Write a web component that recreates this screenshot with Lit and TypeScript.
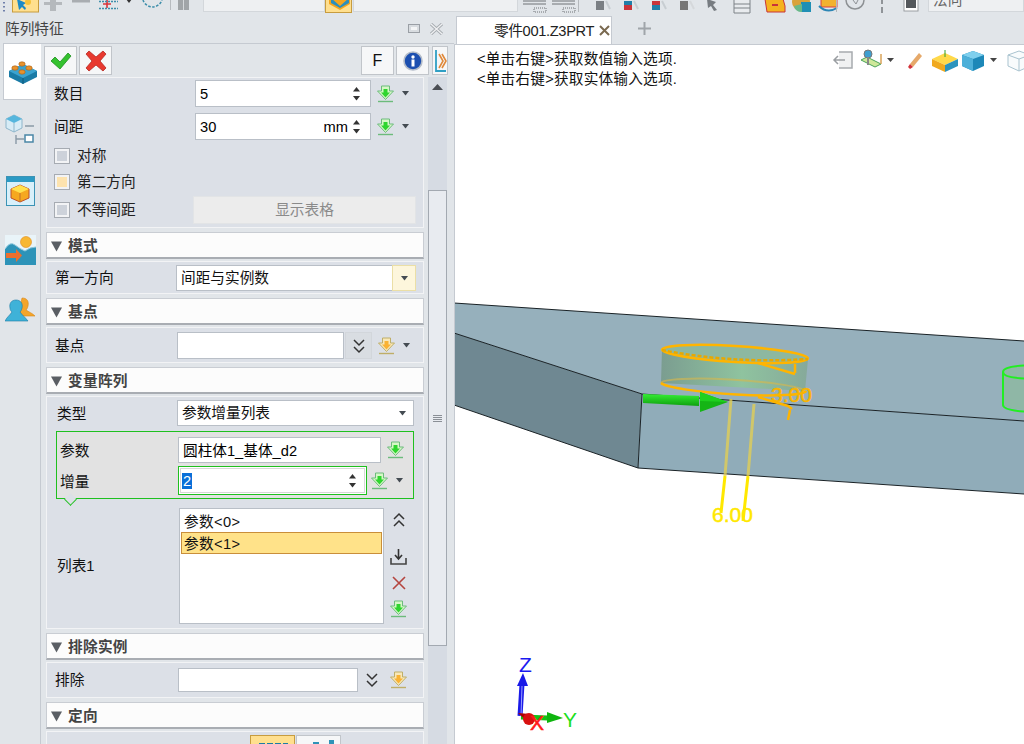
import { css, html, LitElement } from "lit";
import { customElement } from "lit/decorators.js";

const caret = () => html`<svg class="caret" width="7" height="5" viewBox="0 0 7 5"><path d="M0 0h7L3.5 4.5z" fill="#444b52"/></svg>`;

const spin = () => html`<span class="spin">
  <svg width="7" height="5" viewBox="0 0 7 5"><path d="M0 4.5h7L3.5 0z" fill="#333"/></svg>
  <svg width="7" height="5" viewBox="0 0 7 5"><path d="M0 0h7L3.5 4.5z" fill="#333"/></svg>
</span>`;

const pick = (kind: "green" | "orange" = "green") => {
  const top = kind === "green" ? "#2fd52f" : "#f9b233";
  const low = kind === "green" ? "#d6f8c6" : "#f8e8b8";
  const edge = kind === "green" ? "#6cbb7c" : "#bfae68";
  return html`<svg class="pick" width="17" height="18" viewBox="0 0 17 18">
    <path d="M4.500 1h8v5h4l-8 8.500L.5 6h4z" fill="${low}" stroke="${edge}" stroke-width="1"/>
    <path d="M6.500 4h4v3.500h2.500l-4.500 5-4.500-5h2.500z" fill="${top}"/>
    <path d="M1 16.500h15" stroke="${edge}" stroke-width="1.400"/>
  </svg>`;
};

const chevrons = (up = false) => html`<svg width="12" height="16" viewBox="0 0 12 16">
  <path d="${up ? "M1 7l5-5 5 5M1 14l5-5 5 5" : "M1 2l5 5 5-5M1 9l5 5 5-5"}" fill="none" stroke="#333" stroke-width="1.500"/>
</svg>`;

const tri = () => html`<svg class="tri" width="11" height="11" viewBox="0 0 11 11"><path d="M0 .5h11L5.500 10.500z" fill="#5a5e64"/></svg>`;

const brickIcon = html`<svg width="30" height="26" viewBox="0 0 30 26">
  <path d="M1 12L15 5l14 7v6l-14 7-14-7z" fill="#1a7ba6"/>
  <path d="M1 12l14 7 14-7-14-7z" fill="#3ba3cf"/>
  <path d="M15 19v6" stroke="#0d5878"/>
  <g fill="#e8922c" stroke="#a85f16" stroke-width=".6">
    <ellipse cx="14" cy="5" rx="3.200" ry="2.200"/><ellipse cx="21" cy="9" rx="3.200" ry="2.200"/>
    <ellipse cx="7" cy="9" rx="3.200" ry="2.200"/><ellipse cx="14" cy="13" rx="3.200" ry="2.200"/>
  </g>
</svg>`;

const treeIcon = html`<svg width="30" height="32" viewBox="0 0 30 32">
  <path d="M1 6l8-4 8 4v9l-8 4-8-4z" fill="#d7ecf6" stroke="#8fb6cb"/>
  <path d="M1 6l8 4 8-4-8-4z" fill="#56b6dd"/>
  <path d="M9 10v9" stroke="#8fb6cb"/>
  <path d="M20 13h9M11 22v9M11 26h8" stroke="#8a9aa6" stroke-width="1.400"/>
  <rect x="20" y="22" width="8" height="7" fill="#fff" stroke="#4a87a6" stroke-width="1.500"/>
</svg>`;

const windowIcon = html`<svg width="29" height="30" viewBox="0 0 29 30">
  <rect x=".5" y=".5" width="28" height="29" fill="#d8f0fa" stroke="#3c93b5"/>
  <rect x="1" y="1" width="27" height="5" fill="#2b9ac4"/>
  <path d="M5 13l9-4 9 4v9l-9 4-9-4z" fill="#f6a81f" stroke="#c0502a"/>
  <path d="M5 13l9 4 9-4-9-4z" fill="#ffe14d"/>
  <path d="M14 17v9" stroke="#c0702a"/>
</svg>`;

const sceneIcon = html`<svg width="31" height="30" viewBox="0 0 31 30">
  <rect width="31" height="30" fill="#e9f4f9"/>
  <path d="M0 14q5-8 10-4t10 6q5-4 11-4v18H0z" fill="#2d93b8"/>
  <path d="M0 14q5-8 10-4t10 6q5-4 11-4" fill="none" stroke="#8fc7dc"/>
  <circle cx="21" cy="7" r="5.500" fill="#f7b733" stroke="#e08a1e" stroke-width=".6"/>
  <path d="M1 18h10v-4l6 6.500-6 6.500v-4H1z" fill="#ec6f2d"/>
</svg>`;

const usersIcon = html`<svg width="31" height="26" viewBox="0 0 31 26">
  <path d="M17 1c5 0 7 3 6 8-.5 2-1 3-2 4 3 2 6 3 9 6H13z" fill="#f4a52b" stroke="#d98716" stroke-width=".6"/>
  <path d="M11 3c5 0 7 4 6 8-.5 2-1 3-2 4 2 3 5 5 8 9H0c2-4 5-6 7-9-1-1-2-2-2-4-1-4 1-8 6-8z" fill="#3fb2d8" stroke="#1a7ba6" stroke-width=".6"/>
</svg>`;

const toolLeft = html`<svg width="203" height="14" viewBox="0 0 203 14">
  <path d="M4 2v2M4 6v2M4 10v2" stroke="#4b5f96" stroke-width="1.500" stroke-dasharray="1.500 1"/>
  <rect x="12.500" y="-2" width="26" height="14" fill="#ffdf8e" stroke="#c79c3f"/>
  <path d="M17-1l2 11 3-3 3 3 1-2-3-3 3-2z" fill="#1c8ac7"/>
  <circle cx="28" cy="2" r="3" fill="#f5c33b"/>
  <path d="M50-1h6v3h6v3h-6v6h-6V5h-6V2h6z" fill="#b5b9bd"/>
  <rect x="72" y="-1" width="18" height="3.500" fill="#a9adb1"/>
  <path d="M107 0v8M103 4h8" stroke="#d9343a" stroke-width="1.600"/>
  <path d="M99 8.500h19M99 1.500h19" stroke="#3d8eaa" stroke-width="1.500" stroke-dasharray="2 1"/>
  <path d="M126-1h6l-3 4z" fill="#333"/>
  <path d="M143 0a10 10 0 0 0 19 0" fill="none" stroke="#3d8eaa" stroke-width="1.500" stroke-dasharray="2.500 1.500"/>
  <path d="M170.500 0v10" stroke="#b7bbbf"/>
  <rect x="178" y="-1" width="11" height="11" fill="#a1a5a8"/>
  <path d="M183.500-1v11" stroke="#d5d8db"/>
</svg>`;

const toolRight = html`<svg width="410" height="14" viewBox="0 0 410 14">
  <g stroke="#6e7276" fill="none">
    <path d="M5 1h23M5 4h23"/><path d="M16 8h12v4H16z" stroke-dasharray="1 1"/>
    <path d="M34 1h23M34 4h23"/><path d="M45 8h12v4H45z" stroke-dasharray="1 1"/>
  </g>
  <path d="M60.500 0v12" stroke="#b4b8bc"/>
  <g>
    <rect x="78" y="1" width="8" height="9" fill="#7a7f84"/><path d="M88 1l4 8" stroke="#c8cdd2" stroke-width="2"/>
    <rect x="106" y="1" width="8" height="4" fill="#1f7ea8"/><rect x="106" y="5" width="8" height="5" fill="#c8343a"/><path d="M116 1l4 8" stroke="#c8cdd2" stroke-width="2"/>
    <rect x="134" y="1" width="8" height="4" fill="#c8343a"/><rect x="134" y="5" width="8" height="5" fill="#1f7ea8"/><path d="M144 1l4 8" stroke="#c8cdd2" stroke-width="2"/>
    <rect x="162" y="1" width="8" height="9" fill="#777"/><path d="M172 1l4 8" stroke="#d5d8db" stroke-width="2"/>
  </g>
  <path d="M189-1l9 3-3 3 4 5-3 1-3-5-3 2z" fill="#777c81"/>
  <path d="M216-1h16v14h-16zM216 4h16M216 8h16" fill="#e8ebee" stroke="#7d8287"/>
  <path d="M247-1h18l2 7v6h-18z" fill="#f5b21f" stroke="#c8343a"/><path d="M254 5h6" stroke="#c8343a" stroke-width="2"/>
  <circle cx="283" cy="2" r="9" fill="#d9a23a"/><path d="M283 2h10v10h-10z" fill="#1f8fb5"/><path d="M276 6a8 8 0 0 0 8 6V4z" fill="#69b98a"/>
  <rect x="303" y="-2" width="16" height="9" fill="#f2b22f" stroke="#d94040"/><path d="M301 6q8 8 18 2" fill="none" stroke="#2c86b5" stroke-width="2"/>
  <path d="M318.500 0v12" stroke="#b4b8bc"/>
  <path d="M328 0a9 9 0 0 0 18 0" fill="none" stroke="#8d9194" stroke-width="1.500"/><path d="M335 0l3 4 2-4" stroke="#8d9194" fill="none"/>
  <path d="M364 0v4M364 7v6" stroke="#767a7e" stroke-width="1.500"/>
  <rect x="386" y="-2" width="14" height="13" fill="#fff" stroke="#9a9ea2"/><rect x="388" y="-2" width="10" height="10" fill="#54585c"/>
</svg>`;

const canvasIcons = html`<svg width="200" height="24" viewBox="0 0 200 24">
  <path d="M7 4h13v16H7" fill="#f0f1f2" stroke="#a7abaf" stroke-width="1.500"/><path d="M2 12h11M6 8l-4 4 4 4" fill="none" stroke="#9a9ea2" stroke-width="1.500"/>
  <path d="M29 12l14 7 6-3-14-7z" fill="#cfe89a" stroke="#4aa35a"/><circle cx="36" cy="6" r="4" fill="#3f9fd0" stroke="#777"/><path d="M36 9v8" stroke="#888" stroke-width="2"/><path d="M49 6v10" stroke="#d9a35a" stroke-width="1.500"/>
  <path d="M55 10h7l-3.500 4z" fill="#444"/>
  <g transform="translate(4 0)"><path d="M74 16l9-11 3 3-9 11z" fill="#e6a96a"/><path d="M74 16l3 3-3 2-2-2z" fill="#d3343a"/></g>
  <g transform="translate(8 0)"><path d="M92 11l13-6 13 6-13 6z" fill="#ffd94a"/><path d="M92 11l13 6v7l-13-6z" fill="#f0a91f"/><path d="M118 11l-13 6v7l13-6z" fill="#2b93bd"/><path d="M105 2v7" stroke="#2fa02f"/></g>
  <g transform="translate(8 0)"><path d="M122 7l11-4 11 4v11l-11 5-11-5z" fill="#1d88b8"/><path d="M122 7l11 4 11-4-11-4z" fill="#7fd0ee"/><path d="M133 11v12L122 18V7z" fill="#4db0d9"/></g>
  <path d="M158 10h7l-3.500 4z" fill="#444"/>
  <g transform="translate(12 0)"><path d="M164 7l11-4 11 4v11l-11 5-11-5z" fill="#f8fbfc" stroke="#a9c3cf"/><path d="M164 7l11 4 11-4M175 11v12" fill="none" stroke="#a9c3cf"/></g>
</svg>`;

const scene = html`<svg class="scene" width="570" height="700" viewBox="454 44 570 700">
  <defs>
    <linearGradient id="cyl" x1="0" x2="1" y1="0" y2="0">
      <stop offset="0" stop-color="#7b9d90"/><stop offset=".55" stop-color="#8fc39f"/><stop offset="1" stop-color="#86a99a"/>
    </linearGradient>
    <linearGradient id="shaft" x1="0" x2="0" y1="0" y2="1">
      <stop offset="0" stop-color="#35ee35"/><stop offset="1" stop-color="#0ea00e"/>
    </linearGradient>
  </defs>
  <path d="M454 302L1024 340V420L642 393 454 332z" fill="#96b0bc"/>
  <path d="M454 332L642 393 638 467 454 404z" fill="#6f8892"/>
  <path d="M642 393L1024 420V493L638 467z" fill="#90acb9"/>
  <path d="M454 302L1024 340M454 332L642 393L1024 420M642 393L638 467L1024 493M454 404L638 467" fill="none" stroke="#1a2226" stroke-width="1"/>

  <path d="M1040 363a37 7 0 0 0-37 7v33a37 7 0 0 0 21 6h16z" fill="#8fb7a6"/>
  <path d="M1024 364.500q-21 1-21 6.500t21 6.500M1003 371v33q0 5 21 6.500" fill="none" stroke="#22ee22" stroke-width="2"/>

  <path d="M662 348L808 358 805 390 661 382z" fill="url(#cyl)"/>
  <ellipse cx="735" cy="353" rx="73" ry="8" transform="rotate(3.500 735 353)" fill="#8db8a0" stroke="#ffb400" stroke-width="2.500"/>
  <path d="M662 349q70 14 146 9" fill="none" stroke="#e8a800" stroke-width="2.500" stroke-dasharray="4 2"/>
  <path d="M661 382a73 8 3.500 0 1 145 8" fill="none" stroke="#d9b84a" stroke-width="2" opacity=".6"/>
  <path d="M661 382a73 8 3.500 0 0 145 8" fill="none" stroke="#ffb400" stroke-width="2.500"/>
  <path d="M758 362L795 373M795 363v9" fill="none" stroke="#ffb400" stroke-width="2.500"/>
  <path d="M758 396L788 405L792 408M790 409l-2 10" fill="none" stroke="#ffb400" stroke-width="2.500"/>
  <path d="M731 398L725 475M754 403L748 475" stroke="#e6d050" stroke-width="3" opacity=".75"/>
  <path d="M725 475L721 512M748 475L743 520" stroke="#ffe800" stroke-width="3"/>
  <text class="dim" x="771" y="401" fill="#f8b400" stroke="#f8b400">3.00</text>
  <text class="dim" x="712" y="521" fill="#ffe800" stroke="#ffe800">6.00</text>
  <path d="M643 393L699 395V405L643 402z" fill="url(#shaft)"/>
  <path d="M700 391L728 401 700 411z" fill="#15b515"/>
  <path d="M700 391L728 401 700 400z" fill="#1fd01f"/>

  <path d="M520 715L522 683" stroke="#1a1ae8" stroke-width="5"/>
  <path d="M521 715L522 685" stroke="#9aa0ff" stroke-width="1"/>
  <path d="M517 685L523 672 528 685z" fill="#1a1ae8"/>
  <path d="M521 716L548 717" stroke="#15c015" stroke-width="5"/>
  <path d="M547 711L563 717 547 722z" fill="#0fb50f"/>
  <path d="M518 712L530 713 530 723z" fill="#b00000"/>
  <circle cx="529" cy="718" r="6" fill="#d81010"/>
  <text class="axis" x="519" y="671" fill="#1a1af0">Z</text>
  <text class="axis" x="530" y="729" fill="#ff1a1a" stroke="#ff1a1a" stroke-width=".5">X</text>
  <text class="axis" x="563" y="726" fill="#1ee01e">Y</text>
</svg>`;

@customElement("app-root")
export class AppRoot extends LitElement {
  static styles = css`
    :host {
      display: block;
      width: 1024px;
      height: 744px;
      overflow: hidden;
      background: #e1e5e9;
      color: #111;
      font: 14.67px/20px "Liberation Sans", "Noto Sans CJK SC", sans-serif;
    }
    svg { display: block; flex: none; }

    .toolbar { display: flex; height: 14px; overflow: hidden; }
    .tool-box { height: 12px; background: #eef0f2; border: 1px solid #d3d7db; border-top: 0; box-sizing: border-box; }
    .tool-box.a { width: 122px; }
    .tool-box.b { width: 165px; margin-left: 1px; }
    .tool-btn { width: 27px; height: 13px; background: #ffdf8e; border: 1px solid #c79c3f; border-top: 0; box-sizing: border-box; overflow: hidden; }
    .tool-box.c { flex: 1; color: #666; overflow: hidden; padding-left: 4px; margin-left: 0; }
    .tool-box.c span { display: block; margin-top: -10px; }

    .main { display: flex; height: 730px; }

    .panel { width: 454px; display: flex; flex-direction: column; flex: none; }
    .panel-title { height: 29px; flex: none; display: flex; align-items: center; padding: 0 10px 0 5px; color: #444; }
    .panel-title span { flex: 1; }
    .panel-title .close { margin-left: 9px; }
    .panel-body { flex: 1; display: flex; min-height: 0; }

    .tabs { width: 41px; flex: none; box-sizing: border-box; border-right: 1px solid #c5cad1; display: flex; flex-direction: column; align-items: center; position: relative; }
    .tab-on { width: 38px; height: 57px; box-sizing: border-box; background: #fff; border: 1px solid #c5cad1; border-right: 0; margin: 0 -1px 0 3px; display: flex; align-items: center; justify-content: center; flex: none; align-self: flex-start; position: relative; z-index: 1; }
    .tab-icon { width: 40px; display: flex; justify-content: center; height: 30px; align-items: center; flex: none; }
    .tab-icon.t2 { margin-top: 14px; }
    .tab-icon.t3 { margin-top: 32px; }
    .tab-icon.t4 { margin-top: 29px; }
    .tab-icon.t5 { margin-top: 30px; }

    .form { flex: 1; min-width: 0; display: flex; flex-direction: column; border-top: 1px solid #c5cad1; }
    .actions { height: 33px; flex: none; box-sizing: border-box; display: flex; padding: 2px 6px 0 3px; gap: 2px; }
    .act { height: 29px; width: 33px; box-sizing: border-box; background: #f6f7f8; border: 1px solid #c1c5ca; display: flex; align-items: center; justify-content: center; font-size: 16px; color: #111; flex: none; }
    .act.spacer-after { margin-right: auto; }
    .act.thin { width: 16px; margin-left: 1px; }

    .content { flex: 1; min-height: 0; display: flex; padding-left: 5px; gap: 4px; overflow: hidden; }
    .sections { width: 378px; flex: none; display: flex; flex-direction: column; gap: 4px; }
    .group { display: flex; flex-direction: column; gap: 2px; flex: none; }
    .head { height: 27px; box-sizing: border-box; flex: none; background: #fcfcfc; border: 1px solid #c9cdd3; border-bottom: 2px solid #a9adb3; display: flex; align-items: center; gap: 6px; padding: 2px 0 0 4px; font-weight: 700; color: #444; letter-spacing: .3px; }
    .body { background: #dce0e7; border: 1px solid #f2f3f5; box-sizing: border-box; padding: 0 7px 0 8px; flex: none; }
    .row { display: flex; align-items: center; }

    .field { height: 27px; box-sizing: border-box; background: #fff; border: 1px solid #b9bfc7; display: flex; align-items: center; padding: 0 4px 0 4px; flex: none; color: #000; }
    .field .grow { flex: 1; }
    .spin { display: flex; flex-direction: column; gap: 4px; margin: 0 6px 0 5px; }
    .caret { flex: none; }
    .pick { flex: none; }

    .s1 { padding: 2px 7px 3px 7px; }
    .s1 .lbl { width: 141px; }
    .s1 .field { width: 176px; }
    .s1 .pick { margin: 0 8px 0 6px; }
    .s1 .second { margin-top: 6px; }
    .s1 .check { margin-top: 8px; height: 16px; }
    .s1 .check.c2 { margin-top: 10px; }
    .s1 .last { margin-top: 6px; height: 28px; }
    .check-wrap { display: flex; align-items: center; gap: 7px; color: #222; }
    .box { width: 16px; height: 16px; box-sizing: border-box; border: 1px solid #a6abb2; background: #f2f3f5; padding: 2px; flex: none; }
    .box i { display: block; width: 100%; height: 100%; background: #cdd2da; }
    .box.on i { background: #fde3ae; }
    .wide-btn { margin-left: auto; width: 223px; height: 28px; box-sizing: border-box; background: #ececec; border: 1px solid #e2e4e6; color: #8a8a8a; display: flex; align-items: center; justify-content: center; }

    .mode { padding-top: 3px; padding-bottom: 2px; }
    .mode .lbl { width: 121px; }
    .combo { height: 26px; width: 240px; box-sizing: border-box; background: #fff; border: 1px solid #b9bfc7; display: flex; align-items: center; padding-left: 4px; flex: none; }
    .combo span { flex: 1; }
    .combo .btn { width: 22px; align-self: stretch; margin: -1px -1px -1px 0; flex: none; background: #fdf6dc; border: 1px solid #ebdfa6; display: flex; align-items: center; justify-content: center; }

    .base { padding-top: 4px; padding-bottom: 3px; }
    .base .lbl { width: 122px; }
    .base .field { width: 167px; }
    .chev-btn { width: 27px; height: 27px; margin-left: 1px; box-sizing: border-box; background: #d9dde2; border: 1px solid #d2d6db; display: flex; align-items: center; justify-content: center; flex: none; }
    .base .pick { margin: 0 8px 0 6px; }

    .vary { height: 233px; padding: 3px 9px 4px 9px; display: flex; flex-direction: column; }
    .vary .top { padding-top: 0; }
    .vary .top .lbl { width: 121px; padding: 2px 0 0 1px; box-sizing: border-box; }
    .vary .combo { width: 237px; }
    .vary .combo .plain { width: 22px; display: flex; justify-content: center; flex: none; }
    .green-box { margin-top: 5px; height: 68px; box-sizing: border-box; flex: none; background: #e2e2e2; border: 1px solid #1fc01f; padding: 5px 0 3px 3px; position: relative; display: flex; flex-direction: column; gap: 3px; }
    .green-box::after { content: ""; position: absolute; left: 9px; bottom: -6px; width: 8px; height: 8px; background: #dce0e7; border-right: 1px solid #1fc01f; border-bottom: 1px solid #1fc01f; transform: rotate(45deg); }
    .green-box .lbl { width: 118px; padding-top: 2px; box-sizing: border-box; }
    .green-box .field.p { width: 203px; height: 26px; padding-top: 2px; }
    .green-box .field.p + .pick { margin-left: 6px; }
    .green-box .field.i { width: 189px; height: 29px; border: 1px solid #1fc01f; box-shadow: inset 0 0 0 1px #fff, inset 0 0 0 2px #d7d7d7; padding-left: 3px; }
    .green-box .field.i + .pick { margin: 0 8px 0 4px; }
    .sel-text { background: #0a6fd8; color: #fff; line-height: 19px; padding: 0 1px; }
    .list-row { margin-top: 9px; display: flex; flex: none; align-items: stretch; }
    .list-lbl { width: 123px; padding-left: 1px; box-sizing: border-box; align-self: center; flex: none; }
    .list { width: 205px; height: 116px; box-sizing: border-box; background: #fff; border: 1px solid #b9bfc7; padding: 1px; flex: none; }
    .item { height: 22px; line-height: 22px; padding-left: 2px; letter-spacing: .4px; border: 1px solid transparent; box-sizing: border-box; }
    .item.on { background: #ffe289; border-color: #c98e3a; }
    .tools { width: 17px; margin-left: 6px; padding-top: 4px; display: flex; flex-direction: column; align-items: center; flex: none; }
    .tools .t2 { margin-top: 20px; }
    .tools .t3 { margin-top: 9px; }
    .tools .t4 { margin-top: 9px; }

    .omit { padding-top: 5px; padding-bottom: 5px; }
    .omit .lbl { width: 123px; }
    .omit .field { width: 180px; height: 24px; }
    .omit .chev { margin: 0 12px 0 8px; }

    .orient { height: 40px; padding-top: 3px; display: flex; gap: 1px; }
    .orient .opt { width: 45px; height: 28px; box-sizing: border-box; background: #f6f7f8; border: 1px solid #c1c5ca; display: flex; justify-content: center; padding-top: 4px; flex: none; }
    .orient .opt.first { margin-left: 195px; background: #ffdf8e; border-color: #c79c3f; }

    .scroll { width: 19px; flex: none; background: #d6dbe3; display: flex; flex-direction: column; }
    .scroll-top { height: 113px; flex: none; display: flex; justify-content: center; padding-top: 7px; box-sizing: border-box; }
    .thumb { height: 456px; flex: none; box-sizing: border-box; background: #e8ebf0; border: 1px solid #a3a9b1; display: flex; align-items: center; justify-content: center; }

    .view { flex: 1; min-width: 0; display: flex; flex-direction: column; }
    .tab-strip { height: 30px; flex: none; box-sizing: border-box; padding: 2px 0 0 2px; display: flex; align-items: flex-start; }
    .doc-tab { width: 156px; height: 28px; box-sizing: border-box; background: #fff; border: 1px solid #c5cad1; border-bottom: 0; display: flex; align-items: center; padding-left: 37px; color: #222; flex: none; position: relative; z-index: 1; }
    .doc-tab span { flex: 1; letter-spacing: -.35px; white-space: nowrap; }
    .doc-tab svg { margin-right: 1px; }
    .add { margin: 6px 0 0 26px; }
    .canvas { flex: 1; min-height: 0; background: #fff; border-top: 1px solid #c5cad1; border-left: 1px solid #c5cad1; position: relative; overflow: hidden; }
    .scene { position: absolute; left: -1px; top: 0; }
    .scene .dim { font: 21px "Liberation Sans", sans-serif; stroke-width: .5px; }
    .scene .axis { font: 21px "Liberation Sans", sans-serif; }
    .hints { position: absolute; left: 22px; top: 4px; line-height: 20px; color: #111; white-space: nowrap; letter-spacing: .2px; }
    .view-icons { position: absolute; left: 377px; top: 3px; }
  `;

  render() {
    return html`
      <div class="toolbar">
        ${toolLeft}
        <div class="tool-box a"></div>
        <div class="tool-btn"><svg width="27" height="13" viewBox="0 0 27 13"><path d="M3-2h21v6l-10 6-11-6z" fill="#f3a51f"/><path d="M5-2l9 8 9-8v5l-9 5-9-5z" fill="#2b8fbd"/></svg></div>
        <div class="tool-box b"></div>
        ${toolRight}
        <div class="tool-box c"><span>法向</span></div>
      </div>
      <div class="main">
        <div class="panel">
          <div class="panel-title">
            <span>阵列特征</span>
            <svg width="12" height="9" viewBox="0 0 12 9"><rect x=".5" y=".5" width="11" height="8" fill="#d8dce0" stroke="#9a9fa5"/><rect x="3" y="3" width="6" height="3" fill="#f4f5f6"/></svg>
            <svg class="close" width="15" height="12" viewBox="0 0 15 12"><path d="M2 1l11 10M13 1L2 11" stroke="#a8adb2" stroke-width="3.200"/><path d="M2 1l11 10M13 1L2 11" stroke="#f0f1f3" stroke-width="1.200"/></svg>
          </div>
          <div class="panel-body">
            <div class="tabs">
              <div class="tab-on">${brickIcon}</div>
              <div class="tab-icon t2">${treeIcon}</div>
              <div class="tab-icon t3">${windowIcon}</div>
              <div class="tab-icon t4">${sceneIcon}</div>
              <div class="tab-icon t5">${usersIcon}</div>
            </div>
            <div class="form">
              <div class="actions">
                <div class="act"><svg width="22" height="18" viewBox="0 0 22 18"><path d="M1 9l4-4 5 5L18 1l3 3-11 13z" fill="#35c22f" stroke="#1d8f1d" stroke-width=".8"/></svg></div>
                <div class="act spacer-after"><svg width="22" height="22" viewBox="0 0 22 22"><path d="M4 1l7 6 7-6 3 3-6 7 6 7-3 3-7-6-7 6-3-3 6-7-6-7z" fill="#e8392f" stroke="#b52a22" stroke-width=".8"/></svg></div>
                <div class="act">F</div>
                <div class="act"><svg width="20" height="20" viewBox="0 0 20 20"><circle cx="10" cy="10" r="9" fill="#1c4fb0" stroke="#b4bcc8" stroke-width="1.600"/><rect x="8.500" y="8.500" width="3" height="7" fill="#fff"/><circle cx="10" cy="6" r="1.700" fill="#fff"/></svg></div>
                <div class="act thin"><svg width="13" height="24" viewBox="0 0 13 24"><path d="M2 1v21h10" fill="none" stroke="#2f9fc4" stroke-width="1.800"/><path d="M5 5l4 7-4 7M8 5l4 7-4 7" fill="none" stroke="#e0893a" stroke-width="1.600"/></svg></div>
              </div>
              <div class="content">
                <div class="sections">
                  <div class="body s1">
                    <div class="row">
                      <span class="lbl">数目</span>
                      <div class="field"><span class="grow">5</span>${spin()}</div>
                      ${pick()}${caret()}
                    </div>
                    <div class="row second">
                      <span class="lbl">间距</span>
                      <div class="field"><span class="grow">30</span><span>mm</span>${spin()}</div>
                      ${pick()}${caret()}
                    </div>
                    <div class="row check"><div class="check-wrap"><div class="box"><i></i></div>对称</div></div>
                    <div class="row check c2"><div class="check-wrap"><div class="box on"><i></i></div>第二方向</div></div>
                    <div class="row last"><div class="check-wrap"><div class="box"><i></i></div>不等间距</div><div class="wide-btn">显示表格</div></div>
                  </div>

                  <div class="group">
                    <div class="head">${tri()}模式</div>
                    <div class="body mode"><div class="row">
                      <span class="lbl">第一方向</span>
                      <div class="combo"><span>间距与实例数</span><div class="btn">${caret()}</div></div>
                    </div></div>
                  </div>

                  <div class="group">
                    <div class="head">${tri()}基点</div>
                    <div class="body base"><div class="row">
                      <span class="lbl">基点</span>
                      <div class="field"></div>
                      <div class="chev-btn">${chevrons()}</div>
                      ${pick("orange")}${caret()}
                    </div></div>
                  </div>

                  <div class="group">
                    <div class="head">${tri()}变量阵列</div>
                    <div class="body vary">
                      <div class="row top">
                        <span class="lbl">类型</span>
                        <div class="combo"><span>参数增量列表</span><div class="plain">${caret()}</div></div>
                      </div>
                      <div class="green-box">
                        <div class="row">
                          <span class="lbl">参数</span>
                          <div class="field p">圆柱体1_基体_d2</div>
                          ${pick()}
                        </div>
                        <div class="row">
                          <span class="lbl">增量</span>
                          <div class="field i"><span class="grow"><span class="sel-text">2</span></span>${spin()}</div>
                          ${pick()}${caret()}
                        </div>
                      </div>
                      <div class="list-row">
                        <span class="list-lbl">列表1</span>
                        <div class="list">
                          <div class="item">参数&lt;0&gt;</div>
                          <div class="item on">参数&lt;1&gt;</div>
                        </div>
                        <div class="tools">
                          ${chevrons(true)}
                          <svg class="t2" width="17" height="18" viewBox="0 0 17 18"><path d="M8.500 1v9M5 7l3.500 4L12 7" fill="none" stroke="#333" stroke-width="1.600"/><path d="M1 10v6h15v-6" fill="none" stroke="#444" stroke-width="1.600"/></svg>
                          <svg class="t3" width="16" height="16" viewBox="0 0 16 16"><path d="M2 2l12 12M14 2L2 14" stroke="#b5453f" stroke-width="1.600"/></svg>
                          <span class="t4">${pick()}</span>
                        </div>
                      </div>
                    </div>
                  </div>

                  <div class="group">
                    <div class="head">${tri()}排除实例</div>
                    <div class="body omit"><div class="row">
                      <span class="lbl">排除</span>
                      <div class="field"></div>
                      <span class="chev">${chevrons()}</span>
                      ${pick("orange")}
                    </div></div>
                  </div>

                  <div class="group">
                    <div class="head">${tri()}定向</div>
                    <div class="body orient">
                      <div class="opt first"><svg width="30" height="10" viewBox="0 0 30 10"><path d="M1 3h6v7H1zM9 3h6v7H9zM17 3h6v7h-6zM25 3h5v7h-5z" fill="#1d7da3"/></svg></div>
                      <div class="opt"><svg width="30" height="10" viewBox="0 0 30 10"><path d="M1 6h6v4H1zM9 2h6v8H9zM17 5h6v5h-6zM25 0h5v10h-5z" fill="#2f93b8"/></svg></div>
                    </div>
                  </div>
                </div>
                <div class="scroll">
                  <div class="scroll-top"><svg width="11" height="6" viewBox="0 0 11 6"><path d="M0 6h11L5.500 0z" fill="#4a4e54"/></svg></div>
                  <div class="thumb"><svg width="9" height="7" viewBox="0 0 9 7"><path d="M0 .5h9M0 2.500h9M0 4.500h9M0 6.500h9" stroke="#8a8f96"/></svg></div>
                </div>
              </div>
            </div>
          </div>
        </div>

        <div class="view">
          <div class="tab-strip">
            <div class="doc-tab">
              <span>零件001.Z3PRT</span>
              <svg width="11" height="11" viewBox="0 0 11 11"><path d="M1 1l9 9M10 1l-9 9" stroke="#7a6a50" stroke-width="2"/></svg>
            </div>
            <svg class="add" width="13" height="13" viewBox="0 0 13 13"><path d="M6.500 0v13M0 6.500h13" stroke="#a0a5aa" stroke-width="2"/></svg>
          </div>
          <div class="canvas">
            ${scene}
            <div class="hints">&lt;单击右键&gt;获取数值输入选项.<br />&lt;单击右键&gt;获取实体输入选项.</div>
            <div class="view-icons">${canvasIcons}</div>
          </div>
        </div>
      </div>
    `;
  }
}

declare global {
  interface HTMLElementTagNameMap {
    "app-root": AppRoot;
  }
}
